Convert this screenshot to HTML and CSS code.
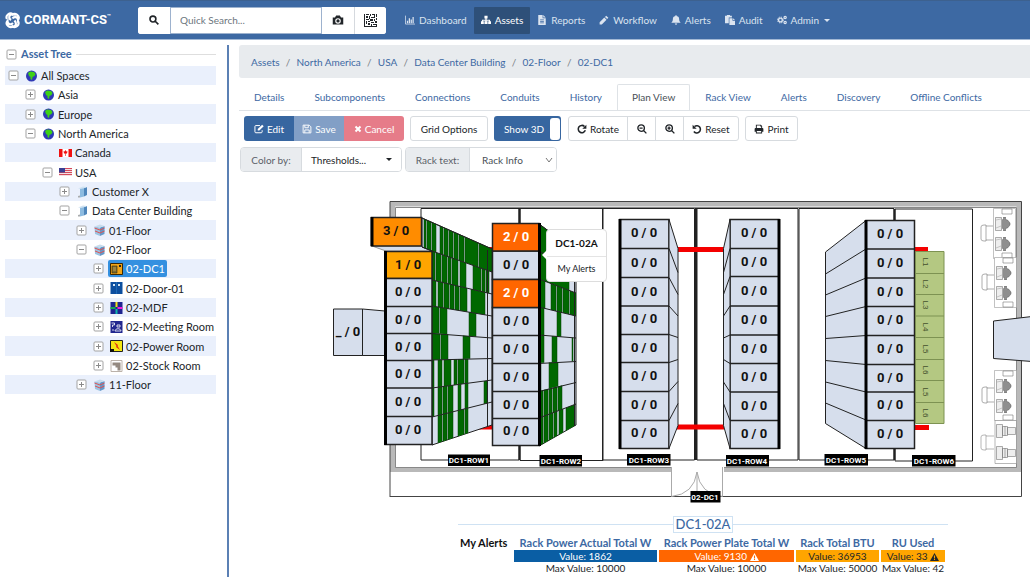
FILE: index.html
```html
<!DOCTYPE html>
<html lang="en">
<head>
<meta charset="utf-8">
<title>Cormant-CS - 02-DC1 Plan View</title>
<link rel="stylesheet" href="styles.css">
</head>
<body>
<svg class="sprite" aria-hidden="true">
  <symbol id="plus" viewBox="0 0 11 11"><rect x="1" y="1" width="9" height="9" rx="1" fill="#fff" stroke="#a3a3a3"/><path d="M3 5.500h5M5.500 3v5" stroke="#8a8a8a"/></symbol>
  <symbol id="minus" viewBox="0 0 11 11"><rect x="1" y="1" width="9" height="9" rx="1" fill="#fff" stroke="#a3a3a3"/><path d="M3 5.500h5" stroke="#8a8a8a"/></symbol>
  <symbol id="globe" viewBox="0 0 13 12"><circle cx="6.500" cy="6" r="5.500" fill="#2f39b5"/><path d="M3 3 5 1.500 9 2l1.500 2-1 2-2 1-.5 3-1.500-1V7L4 6z" fill="#3ed016"/></symbol>
  <symbol id="canada" viewBox="0 0 13 12"><path fill="#fff" d="M0 2h13v8H0z"/><path fill="#f01010" d="M0 2h3.500v8H0zM9.500 2H13v8H9.500zM6.500 3l1 1.500 1-.2-.5 2.200H6.800V9h-.6V6.500H5l-.5-2.200 1 .2z"/></symbol>
  <symbol id="usa" viewBox="0 0 13 12"><path fill="#f3dfe3" d="M0 2h13v8H0z"/><path stroke="#d54a5c" d="M0 2.500h13M0 4.500h13M0 6.500h13M0 8.500h13"/><path fill="#3b3f94" d="M0 2h6v4.500H0z"/></symbol>
  <symbol id="building" viewBox="0 0 13 12"><path fill="#8dbbe0" d="M4 2.500 8 2v8.500l-4 1z"/><path fill="#4f86bb" d="M8 2l3-1v8l-3 1.500z"/><path fill="#cfe2f2" d="M2 2.500 7 .5l4 .5-3 1.200-4 .6z"/><path fill="#a9acae" d="M2 10l2-.5v2H2z"/></symbol>
  <symbol id="floor" viewBox="0 0 13 12"><path fill="#9cc3e2" d="M1.500 2.500 7 3.500V12l-5-2z"/><path fill="#6598c8" d="M7 3.500 11.500 2v8L7 12z"/><path fill="#c7dced" d="M1.500 2.500 7 .5l4.500 1.500L7 3.500z"/><path d="M1.500 4 7 6l4.500-2M2 7l5 2 4.500-2" fill="none" stroke="#dc5353"/></symbol>
  <symbol id="dc" viewBox="0 0 13 12"><path fill="#f0a418" stroke="#3b2700" d="M.5.5h12v11H.5z"/><path fill="#806b2c" stroke="#382b0a" stroke-width=".6" d="M2 3h5v7H2z"/><path fill="#222" d="M9 2h2v2H9z"/><path d="M3 5h3M3 7h3" stroke="#d9b45e" stroke-width=".7"/></symbol>
  <symbol id="door" viewBox="0 0 13 12"><path fill="#0d4f9f" d="M.5 0h12v12H.5z"/><path stroke="#1d69b6" d="M6.500 0v12"/><path fill="#d8e8f4" d="M3 2h2v2H3zM8 2h2v2H8z"/></symbol>
  <symbol id="mdf" viewBox="0 0 13 12"><path fill="#1e2490" d="M.5 0h12v12H.5z"/><path fill="#14a451" d="M.5 5h5v2h-5z"/><path fill="#f3e21b" d="M5.500 0h2v5h-2z"/><path fill="#f31bd9" d="M7.500 5h5v2h-5z"/><path fill="#12b6ae" d="M5.500 7h2v5h-2z"/></symbol>
  <symbol id="meeting" viewBox="0 0 13 12"><path fill="#22288f" d="M.5 0h12v12H.5z"/><path fill="none" stroke="#fff" stroke-width=".8" d="M1.500 2h3v2h-2v2M7 4h3v2H7zM5 10c0-3 6-3 6 0zM2 9h2"/></symbol>
  <symbol id="power" viewBox="0 0 13 12"><path fill="#f4e812" stroke="#222" d="M.5.5h12v11H.5z"/><path fill="#e22a13" d="m4 2 4 3-.5 1 2.500 4-4-3 .5-1z"/><path fill="#111" d="M0 9h4v3H0z"/></symbol>
  <symbol id="stock" viewBox="0 0 13 12"><path fill="#fff" stroke="#bbb2aa" d="M1 .5h11v11H1z"/><path fill="#948980" d="M2.500 2.500h8v8h-3v-3h-2v-2h-3z"/></symbol>
  <symbol id="search" viewBox="0 0 16 16"><path fill="none" stroke="currentColor" stroke-width="2.600" d="M11 6.500a4.700 4.700 0 1 1-9.400 0 4.700 4.700 0 0 1 9.400 0zM10 10l5 5"/></symbol>
  <symbol id="zoomout" viewBox="0 0 16 16"><path fill="none" stroke="currentColor" stroke-width="2.200" d="M11.800 6.500a5.200 5.200 0 1 1-10.400 0 5.200 5.200 0 0 1 10.400 0zM10.500 10.500l4.500 4.500M4 6.500h5"/></symbol>
  <symbol id="zoomin" viewBox="0 0 16 16"><path fill="none" stroke="currentColor" stroke-width="2.200" d="M11.800 6.500a5.200 5.200 0 1 1-10.400 0 5.200 5.200 0 0 1 10.400 0zM10.500 10.500l4.500 4.500M4 6.500h5M6.500 4v5"/></symbol>
  <symbol id="rotate" viewBox="0 0 16 16"><path fill="none" stroke="currentColor" stroke-width="2.500" d="M12 4a5.800 5.800 0 1 0 1.300 6"/><path fill="currentColor" d="M15 1v6.500H8.500z"/></symbol>
  <symbol id="reset" viewBox="0 0 16 16"><path fill="none" stroke="currentColor" stroke-width="2.500" d="M4 4a5.800 5.800 0 1 1-1 8"/><path fill="currentColor" d="M1 1v6.500h6.500z"/></symbol>
  <symbol id="print" viewBox="0 0 16 16"><path fill="currentColor" d="M3 1h8l2 2v4h-1.500V4H10V2.500H4.500V7H3zM1 8q0-1.500 1.500-1.500h11Q15 6.500 15 8v4.500h-2V15H3v-2.500H1zm3.500 3v2.500h7V11z"/></symbol>
  <symbol id="edit" viewBox="0 0 16 16"><path fill="none" stroke="currentColor" stroke-width="1.600" d="M9.500 2.500H3Q1.500 2.500 1.500 4v8.500Q1.500 14 3 14h8.500q1.500 0 1.500-1.500V10"/><path fill="currentColor" d="m13 1 2.500 2.500-7 7H6V8z"/></symbol>
  <symbol id="save" viewBox="0 0 16 16"><path fill="none" stroke="currentColor" stroke-width="1.500" d="M1.800 1.800h9.700l2.700 2.700v9.700H1.800zM4.500 2v4h5.500V2M4.500 14V9.500h7V14"/></symbol>
  <symbol id="cross" viewBox="0 0 16 16"><path stroke="currentColor" stroke-width="4" d="m3 3 10 10M13 3 3 13"/></symbol>
  <symbol id="camera" viewBox="0 0 16 16"><path fill="currentColor" fill-rule="evenodd" d="M1 4.500h3L5.500 2h5L12 4.500h3V14H1zM8 5.500a3.700 3.700 0 1 0 0 7.400 3.700 3.700 0 0 0 0-7.400zm0 1.500a2.200 2.200 0 1 1 0 4.400A2.200 2.200 0 0 1 8 7z"/></symbol>
  <symbol id="qr" viewBox="0 0 13 13"><path fill="currentColor" d="M0 0h1v13H0zM1 12h12v1H1zM2 0h3v1H2zM6 0h1v2H6zM8 0h3v1H8zM12 0h1v3h-1zM2 2h2v2H2zM5 2h1v3H5zM7 3h3v1H7zM10 1h1v3h-1zM12 4h1v2h-1zM2 5h3v1H2zM6 5h3v2H6zM10 5h1v2h-1zM2 7h1v3H2zM4 7h2v1H4zM7 8h3v1H7zM11 7h2v2h-2zM4 9h2v2H4zM7 10h1v2H7zM9 10h3v1H9zM12 10h1v2h-1z"/></symbol>
  <symbol id="chart" viewBox="0 0 16 16"><path fill="none" stroke="currentColor" stroke-width="1.200" d="M.8 1v13.500H16"/><path fill="currentColor" d="M3 9h2v4H3zM6 5h2v8H6zM9 7h2v6H9zM12 3h2v10h-2z"/></symbol>
  <symbol id="sitemap" viewBox="0 0 16 16"><path fill="currentColor" d="M5.500 1h5v4.500H9v2h5.500V10H16v4.500h-4.500V10H13V9H9v1h1.500v4.500h-5V10H7V9H3v1h1.500v4.500H0V10h1.500V7.500H7v-2H5.500z"/></symbol>
  <symbol id="file" viewBox="0 0 16 16"><path fill="currentColor" fill-rule="evenodd" d="M2 0h7v5h5v11H2zm8 0 4 4h-4zM5 7v1.200h6V7zm0 2.500v1.200h6V9.500zM5 12v1.200h6V12z"/></symbol>
  <symbol id="pencil" viewBox="0 0 16 16"><path fill="currentColor" d="M11.500 1 15 4.500 13 6.500 9.500 3zM8.500 4 12 7.500 4.500 15H1v-3.500z"/></symbol>
  <symbol id="bell" viewBox="0 0 16 16"><path fill="currentColor" d="M8 0q1 0 1 1.500c3 .5 4 2.500 4 5 0 3 1 4.500 2.500 6H.5C2 11 3 9.500 3 6.500c0-2.500 1-4.500 4-5Q7 0 8 0zM6 13.500h4q-.5 2-2 2t-2-2z"/></symbol>
  <symbol id="paste" viewBox="0 0 16 16"><path fill="currentColor" d="M0 1h3V0h5v1h3v3H6v9H0zM7 5h5v4h4v7H7zM13 5l3 3h-3z"/></symbol>
  <symbol id="cogs" viewBox="0 0 16 16"><circle cx="5.500" cy="8" r="3" fill="none" stroke="currentColor" stroke-width="2.200"/><circle cx="5.500" cy="8" r="4.700" fill="none" stroke="currentColor" stroke-width="1.600" stroke-dasharray="2 1.700"/><g fill="none" stroke="currentColor" stroke-width="2"><circle cx="13" cy="4" r="1.800"/><circle cx="13" cy="12" r="1.800"/></g></symbol>
  <symbol id="warn" viewBox="0 0 16 14"><path fill="currentColor" fill-rule="evenodd" d="M8 0l8 14H0zM7 4.500v5h2v-5zM7 10.500v2h2v-2z"/></symbol>
  <symbol id="screen" viewBox="0 0 16 14"><path fill="#eee" stroke="#777" stroke-width=".6" d="M.5.500h6v13h-6z"/><path stroke="#999" stroke-width=".5" d="m1 3 5-1M1 11l5-2"/><path fill="#8f8f8f" stroke="#555" stroke-width=".5" d="M8.500 0h2v2.500l2 .5 2.500 3v2l-2.500 3-2 .5V14h-2v-2.500h-1v-9h1z"/></symbol>
  <symbol id="cabinet" viewBox="0 0 20 14"><path fill="#eee" stroke="#777" stroke-width=".6" d="M.5.500h6v13h-6zM6.500 2.500h5v9h-5zM11.500 3.500h8v7h-8z"/><path stroke="#777" stroke-width=".6" d="M9 2v10"/></symbol>
  <symbol id="desk" viewBox="0 0 36 51"><path fill="#fff" stroke="#999" stroke-width=".6" d="M13.500.500h22v50h-22z"/><path fill="#fff" stroke="#777" stroke-width=".6" d="M22 1h10v5H22zM22 45h10v5H22zM1 19q0-2 3-2h2v16H4q-3 0-3-2zM6 18h7M6 32h7"/><use href="#screen" x="15" y="9" width="16" height="14"/><use href="#screen" x="15" y="29" width="16" height="14"/></symbol>
</svg>

<header class="topbar">
  <a class="brand" href="#">
    <svg width="15" height="17" viewBox="0 0 15 17"><g fill="none" stroke="#fff" stroke-width="2.200"><path d="M2 7C0 3 5 0 8 2.500 4 2 3 6 6 8"/><path d="M6.500 3c4-3 9 1 6.500 5 0-3-4-4-5.500-1.500"/><path d="M13 9c2 4-2 7.500-6 5.500 4 .5 5-3 2.500-6"/><path d="M8.500 14C4 17 0 12 2.500 9c0 3 3 4.500 5.500 2"/></g></svg>
    <span>CORMANT-CS</span><sup>™</sup>
  </a>
  <form class="search">
    <button type="button" aria-label="Search"><svg class="ic"><use href="#search"/></svg></button>
    <input type="text" placeholder="Quick Search..." aria-label="Quick Search">
    <button type="button" aria-label="Camera"><svg class="ic big"><use href="#camera"/></svg></button>
    <button type="button" aria-label="Scan code"><svg class="ic qr"><use href="#qr"/></svg></button>
  </form>
  <nav class="mainnav">
    <a href="#"><svg class="ic nav"><use href="#chart"/></svg>Dashboard</a>
    <a href="#" class="active"><svg class="ic nav"><use href="#sitemap"/></svg>Assets</a>
    <a href="#"><svg class="ic nav"><use href="#file"/></svg>Reports</a>
    <a href="#"><svg class="ic nav"><use href="#pencil"/></svg>Workflow</a>
    <a href="#"><svg class="ic nav"><use href="#bell"/></svg>Alerts</a>
    <a href="#"><svg class="ic nav"><use href="#paste"/></svg>Audit</a>
    <a href="#"><svg class="ic nav"><use href="#cogs"/></svg>Admin<i class="caret"></i></a>
  </nav>
</header>

<div class="layout">
<aside class="sidebar">
  <h2><svg class="box"><use href="#minus"/></svg><span>Asset Tree</span></h2>
  <ul class="tree">
    <li class="l0"><svg class="box"><use href="#minus"/></svg><a href="#"><svg class="pic"><use href="#globe"/></svg>All Spaces</a></li>
    <li class="l1"><svg class="box"><use href="#plus"/></svg><a href="#"><svg class="pic"><use href="#globe"/></svg>Asia</a></li>
    <li class="l1"><svg class="box"><use href="#plus"/></svg><a href="#"><svg class="pic"><use href="#globe"/></svg>Europe</a></li>
    <li class="l1"><svg class="box"><use href="#minus"/></svg><a href="#"><svg class="pic"><use href="#globe"/></svg>North America</a></li>
    <li class="l2"><svg class="box"></svg><a href="#"><svg class="pic"><use href="#canada"/></svg>Canada</a></li>
    <li class="l2"><svg class="box"><use href="#minus"/></svg><a href="#"><svg class="pic"><use href="#usa"/></svg>USA</a></li>
    <li class="l3"><svg class="box"><use href="#plus"/></svg><a href="#"><svg class="pic"><use href="#building"/></svg>Customer X</a></li>
    <li class="l3"><svg class="box"><use href="#minus"/></svg><a href="#"><svg class="pic"><use href="#building"/></svg>Data Center Building</a></li>
    <li class="l4"><svg class="box"><use href="#plus"/></svg><a href="#"><svg class="pic"><use href="#floor"/></svg>01-Floor</a></li>
    <li class="l4"><svg class="box"><use href="#minus"/></svg><a href="#"><svg class="pic"><use href="#floor"/></svg>02-Floor</a></li>
    <li class="l5"><svg class="box"><use href="#plus"/></svg><a href="#" class="selected"><svg class="pic"><use href="#dc"/></svg>02-DC1</a></li>
    <li class="l5"><svg class="box"><use href="#plus"/></svg><a href="#"><svg class="pic"><use href="#door"/></svg>02-Door-01</a></li>
    <li class="l5"><svg class="box"><use href="#plus"/></svg><a href="#"><svg class="pic"><use href="#mdf"/></svg>02-MDF</a></li>
    <li class="l5"><svg class="box"><use href="#plus"/></svg><a href="#"><svg class="pic"><use href="#meeting"/></svg>02-Meeting Room</a></li>
    <li class="l5"><svg class="box"><use href="#plus"/></svg><a href="#"><svg class="pic"><use href="#power"/></svg>02-Power Room</a></li>
    <li class="l5"><svg class="box"><use href="#plus"/></svg><a href="#"><svg class="pic"><use href="#stock"/></svg>02-Stock Room</a></li>
    <li class="l4"><svg class="box"><use href="#plus"/></svg><a href="#"><svg class="pic"><use href="#floor"/></svg>11-Floor</a></li>
  </ul>
</aside>

<main class="main">
  <nav class="crumbs" aria-label="Breadcrumb"><a href="#">Assets</a><i>/</i><a href="#">North America</a><i>/</i><a href="#">USA</a><i>/</i><a href="#">Data Center Building</a><i>/</i><a href="#">02-Floor</a><i>/</i><a href="#">02-DC1</a></nav>
  <nav class="tabs">
    <a href="#">Details</a><a href="#">Subcomponents</a><a href="#">Connections</a><a href="#">Conduits</a><a href="#">History</a><a href="#" class="active">Plan View</a><a href="#">Rack View</a><a href="#">Alerts</a><a href="#">Discovery</a><a href="#">Offline Conflicts</a>
  </nav>
  <div class="tools">
    <div class="group solid">
      <button class="edit"><svg class="ic"><use href="#edit"/></svg>Edit</button><button class="save"><svg class="ic"><use href="#save"/></svg>Save</button><button class="cancel"><svg class="ic sm"><use href="#cross"/></svg>Cancel</button>
    </div>
    <div class="group"><button class="grid-options">Grid Options</button></div>
    <label class="toggle">Show 3D<input type="checkbox" checked></label>
    <div class="group view">
      <button class="rotate"><svg class="ic"><use href="#rotate"/></svg>Rotate</button><button class="zoom" aria-label="Zoom out"><svg class="ic"><use href="#zoomout"/></svg></button><button class="zoom" aria-label="Zoom in"><svg class="ic"><use href="#zoomin"/></svg></button><button class="reset"><svg class="ic"><use href="#reset"/></svg>Reset</button>
    </div>
    <div class="group"><button class="print"><svg class="ic"><use href="#print"/></svg>Print</button></div>
  </div>
  <div class="filters">
    <div class="field"><span class="tag color">Color by:</span><button class="drop">Thresholds...<i class="caret"></i></button></div>
    <div class="field"><label class="tag rack" for="racktext">Rack text:</label><div class="pick"><select id="racktext"><option>Rack Info</option></select><svg viewBox="0 0 8 8"><path d="M1 2l3 4 3-4" fill="none" stroke="#777"/></svg></div></div>
  </div>

  <div class="plan">
  <svg class="drawing" viewBox="230 172 800 338" role="img" aria-label="Floor plan of 02-DC1">
    <defs>
      <clipPath id="a1"><path d="M422 218 492 249V272L432 251 422 247z"/></clipPath>
      <clipPath id="a2"><path d="M432 251 492 272V294L432 280z"/></clipPath>
      <clipPath id="a3"><path d="M432 280 492 294V316L432 306z"/></clipPath>
      <clipPath id="a4"><path d="M432 306 492 316V338L432 333z"/></clipPath>
      <clipPath id="a5"><path d="M432 333 492 338V358L432 360z"/></clipPath>
      <clipPath id="a6"><path d="M432 360 492 358V380L432 388z"/></clipPath>
      <clipPath id="a7"><path d="M432 388 492 380V402L432 417z"/></clipPath>
      <clipPath id="a8"><path d="M432 417 492 402V425L432 445z"/></clipPath>
      <clipPath id="b1"><path d="M539 224 576 251V272L539 251z"/></clipPath>
      <clipPath id="b2"><path d="M539 251 576 272V293L539 279z"/></clipPath>
      <clipPath id="b3"><path d="M539 279 576 293V316L539 307z"/></clipPath>
      <clipPath id="b4"><path d="M539 307 576 316V338L539 335z"/></clipPath>
      <clipPath id="b5"><path d="M539 335 576 338V361L539 363z"/></clipPath>
      <clipPath id="b6"><path d="M539 363 576 361V382L539 391z"/></clipPath>
      <clipPath id="b7"><path d="M539 391 576 382V404L539 418z"/></clipPath>
      <clipPath id="b8"><path d="M539 418 576 404V425L539 446z"/></clipPath>
    </defs>
    <!-- walls -->
    <path class="wall" d="M671 469.500H392.500V204H1019v265.500H724"/>
    <path class="thin" d="M671 467.500H395.500V207.500H1016.500V467.500H724"/>
    <path class="outer" d="M390 497V201.500H1021.500V496.500H390"/>
    <path class="door" d="M671.500 467v29.500M722.500 467v29.500M697 472v24M671.500 496.500Q694 494 697 472 700 494 722.500 496.500"/>
    <!-- row outlines -->
    <path class="row" d="M421 208.500h98v251.500h-98zM520 208.500h83v252h-83zM602.500 208.500h92v251.500h-92zM697 208.500h101v251.500h-101zM799 208.500h95v251.500h-95zM895 209h77.500v252H895z"/>
    <path class="thick" d="M519.500 208v252M696 208v252M894.500 209v251"/>
    <!-- overhead trays -->
    <path class="tray" d="M480 249.500h20M478 427h20M677 249.500h47M677 427h47M914 249.500h14M914 427.500h15"/>
    <!-- desks -->
    <use href="#desk" x="980" y="208" width="36" height="51"/>
    <use href="#desk" x="981" y="257" width="36" height="51"/>
    <use href="#desk" x="981" y="370" width="36" height="51"/>
    <path class="desktop" d="M995 420.500h21.500v43H995zM981 437q0-2 3-2h2v15h-2q-3 0-3-2zM986 436h8M986 449h8"/>
    <use href="#cabinet" x="996" y="424" width="20" height="14"/>
    <use href="#cabinet" x="996" y="446" width="20" height="14"/>
    <!-- outlying racks -->
    <path class="cell" d="M333.500 309h29v46.500h-29zM362.500 309l22.500 2v44.500h-22.500zM1032 316.500l-38.500 4.500v37.500l38.500 3z"/>
    <!-- row 1 -->
    <path class="cell faint" d="M372 246h50l10 5h-46z"/>
    <path class="cell" d="M422 218 492 249V425L432 445V251l-10-4z"/>
    <g class="rackfill">
      <path clip-path="url(#a1)" d="M424 210h2v80h-2zM427 210h4v80h-4zM432 210h4v80h-4zM440 210h3v80h-3zM444 210h4v80h-4zM449 210h4v80h-4zM454 210h4v80h-4zM459 210h5v80h-5zM465 210h13v80h-13zM479 210h13v80h-13z"/>
      <path clip-path="url(#a2)" d="M432 240h3v60h-3zM436 240h5v60h-5zM442 240h5v60h-5zM448 240h3v60h-3zM452 240h6v60h-6zM460 240h6v60h-6zM473 240h8v60h-8zM482 240h3v60h-3zM486 240h3v60h-3z"/>
      <path clip-path="url(#a3)" d="M432 270h4v60h-4zM438 270h5v60h-5zM444 270h5v60h-5zM450 270h4v60h-4zM455 270h4v60h-4zM460 270h7v60h-7zM471 270h14v60h-14z"/>
      <path clip-path="url(#a4)" d="M432 300h7v60h-7zM440 300h7v60h-7zM469 300h7v60h-7z"/>
      <path clip-path="url(#a5)" d="M432 330h8v60h-8zM441 330h7v60h-7zM463 330h7v60h-7z"/>
      <path clip-path="url(#a6)" d="M432 350h2v60h-2zM438 350h4v60h-4zM444 350h7v60h-7zM454 350h3v60h-3zM458 350h6v60h-6zM465 350h3v60h-3z"/>
      <path clip-path="url(#a7)" d="M432 370h2v60h-2zM438 370h4v60h-4zM443 370h4v60h-4zM448 370h5v60h-5zM458 370h3v60h-3zM465 370h3v60h-3zM484 370h3v60h-3z"/>
      <path clip-path="url(#a8)" d="M438 400h4v60h-4zM443 400h4v60h-4zM448 400h5v60h-5zM458 400h6v60h-6zM465 400h3v60h-3z"/>
    </g>
    <path class="edge" d="M422 218 492 249M422 247l10 4 60 21M432 280l60 14M432 306l60 10M432 333.500l60 4.500M432 360l60-1.500M432 388l60-8M432 417l60-15M487.500 250v176"/>
    <path class="cell amber-dark" d="M371.500 217.500h50V246h-50z"/>
    <path class="cell amber" d="M385 251.500h47v27h-47z"/>
    <path class="cell bold" d="M385 278.500h47v28h-47zM385 306.500h47v27h-47zM385 333.500h47v27h-47zM385 360.500h47v27.500h-47zM385 388h47v28.500h-47zM385 416.500h47v28h-47z"/>
    <path class="side" d="M372 217v29M385.500 251v194"/>
    <!-- row 2 -->
    <path class="cell" d="M539 224 576 251V425L539 446z"/>
    <g class="rackfill">
      <path clip-path="url(#b1)" d="M539 220h37v60h-37z"/>
      <path clip-path="url(#b2)" d="M539 240h30v60h-30z"/>
      <path clip-path="url(#b3)" d="M539 270h6v60h-6zM551 270h5v60h-5zM557 270h5v60h-5zM563 270h6v60h-6zM570 270h6v60h-6z"/>
      <path clip-path="url(#b4)" d="M539 300h5v60h-5zM557 300h4v60h-4z"/>
      <path clip-path="url(#b5)" d="M539 330h5v60h-5zM552 330h5v60h-5zM572 330h1v60h-1z"/>
      <path clip-path="url(#b6)" d="M539 350h2v60h-2zM549 350h9v60h-9z"/>
      <path clip-path="url(#b7)" d="M539 370h4v60h-4zM544 370h4v60h-4zM549 370h3v60h-3zM553 370h4v60h-4zM558 370h4v60h-4z"/>
      <path clip-path="url(#b8)" d="M539 390h4v60h-4zM544 390h4v60h-4zM549 390h4v60h-4zM554 390h3v60h-3zM559 390h4v60h-4zM566 390h9v60h-9z"/>
    </g>
    <path class="edge" d="M539 224l37 27M539 251l37 21M539 279l37 14M539 307l37 9M539 335l37 3M539 363.500l37-2M539 391.500l37-9M539 418l37-14M574.500 252v174"/>
    <path class="cell bold" d="M492.500 251h46.500v28.500h-46.500zM492.500 307.500h46.500v28h-46.500zM492.500 335.500h46.500v28h-46.500zM492.500 363.500h46.500v28h-46.500zM492.500 391.500h46.500v27h-46.500zM492.500 418.500h46.500v27h-46.500z"/>
    <path class="cell orange" d="M492.500 223.500h46.500v27.500h-46.500zM492.500 279.500h46.500v28h-46.500z"/>
    <path class="side" d="M539.500 223v223"/>
    <!-- row 3 -->
    <path class="cell bold" d="M620 219.500h49v229h-49zM620 248.500h49M620 277.500h49M620 306h49M620 334.500h49M620 362.500h49M620 391.500h49M620 420.500h49"/>
    <path class="cell" d="M669 219.500l9 29v177l-9 23zM669 248.500l9 24M669 277.500l9 17M669 306l9 10M669 334.500l9 3M669 362.500l9-3M669 391.500l9-10M669 420.500l9-17"/>
    <path class="side" d="M620 219v230"/>
    <!-- row 4 -->
    <path class="cell bold" d="M730 219.500h49v229h-49zM730 248.500h49M730 276.500h49M730 306h49M730 335h49M730 363.500h49M730 392h49M730 420.500h49"/>
    <path class="cell" d="M730 219.500l-6.500 29v177l6.500 23zM730 248.500l-6.500 24M730 276.500l-6.500 18M730 306l-6.500 10M730 335l-6.500 3M730 363.500l-6.500-4M730 392l-6.500-10M730 420.500l-6.500-17"/>
    <path class="side" d="M779 219v230"/>
    <!-- row 5 -->
    <path class="cell" d="M866 220.500 825.500 252V423.500L866 448.500zM866 249l-40.500 25M866 278l-40.500 17M866 306.500l-40.500 10M866 335.500l-40.500 3M866 364.500l-40.500-4M866 392l-40.500-10M866 420l-40.500-17"/>
    <path class="cell bold" d="M866 220.500h48.500v228H866zM866 249h48.500M866 278h48.500M866 306.500h48.500M866 335.500h48.500M866 364.500h48.500M866 392h48.500M866 420.500h48.500"/>
    <path class="side" d="M866 220v229"/>
    <!-- row 6 -->
    <path class="green" d="M915.500 251.500h28.500v172h-28.500zM915.500 273.500H944M915.500 294.500H944M915.500 316H944M915.500 337.500H944M915.500 359.500H944M915.500 380.500H944M915.500 402.500H944"/>
    <g class="lnum">
      <text transform="translate(923 262) rotate(90)">L1</text><text transform="translate(923 284) rotate(90)">L2</text><text transform="translate(923 305) rotate(90)">L3</text><text transform="translate(923 327) rotate(90)">L4</text><text transform="translate(923 349) rotate(90)">L5</text><text transform="translate(923 370) rotate(90)">L6</text><text transform="translate(923 392) rotate(90)">L5</text><text transform="translate(923 413) rotate(90)">L6</text>
    </g>
    <g class="count">
      <text x="348" y="336">_ / 0</text>
      <text x="396" y="235">3 / 0</text><text x="408" y="269">1 / 0</text><text x="408" y="296">0 / 0</text><text x="408" y="324">0 / 0</text><text x="408" y="351">0 / 0</text><text x="408" y="378">0 / 0</text><text x="408" y="406">0 / 0</text><text x="408" y="434">0 / 0</text>
      <text x="516" y="241" class="light">2 / 0</text><text x="516" y="269">0 / 0</text><text x="516" y="297" class="light">2 / 0</text><text x="516" y="325">0 / 0</text><text x="516" y="353">0 / 0</text><text x="516" y="381">0 / 0</text><text x="516" y="409">0 / 0</text><text x="516" y="435">0 / 0</text>
      <text x="644" y="237">0 / 0</text><text x="644" y="267">0 / 0</text><text x="644" y="296">0 / 0</text><text x="644" y="323">0 / 0</text><text x="644" y="352">0 / 0</text><text x="644" y="380">0 / 0</text><text x="644" y="409">0 / 0</text><text x="644" y="437">0 / 0</text>
      <text x="754" y="237">0 / 0</text><text x="754" y="266">0 / 0</text><text x="754" y="295">0 / 0</text><text x="754" y="324">0 / 0</text><text x="754" y="353">0 / 0</text><text x="754" y="381">0 / 0</text><text x="754" y="410">0 / 0</text><text x="754" y="438">0 / 0</text>
      <text x="890" y="238">0 / 0</text><text x="890" y="267">0 / 0</text><text x="890" y="296">0 / 0</text><text x="890" y="324">0 / 0</text><text x="890" y="353">0 / 0</text><text x="890" y="382">0 / 0</text><text x="890" y="409">0 / 0</text><text x="890" y="438">0 / 0</text>
    </g>
    <path d="M448 454.500h42v11.500h-42zM539.500 455h42.500v11.500h-42.500zM627 454h43.500v11.500H627zM726 455h43v11.500h-43zM824.500 454h43.500v11.500h-43.500zM912 455h43.500v11.500H912zM690.500 491h30v11.500h-30z"/>
    <g class="name">
      <text x="469" y="463">DC1-ROW1</text><text x="561" y="464">DC1-ROW2</text><text x="649" y="463">DC1-ROW3</text><text x="747" y="464">DC1-ROW4</text><text x="846" y="463">DC1-ROW5</text><text x="934" y="464">DC1-ROW6</text><text x="705" y="500">02-DC1</text>
    </g>
  </svg>
  <div class="tip" role="tooltip"><strong>DC1-02A</strong><span>My Alerts</span></div>
  </div>

  <section class="summary">
    <h3><span>DC1-02A</span></h3>
    <table>
      <thead><tr><th class="label" scope="row">My Alerts</th><th class="actual">Rack Power Actual Total W</th><th class="plate">Rack Power Plate Total W</th><th class="btu">Rack Total BTU</th><th class="ru">RU Used</th></tr></thead>
      <tbody>
        <tr><td></td><td class="v-blue">Value: 1862</td><td class="v-orange">Value: 9130 <svg class="wi"><use href="#warn"/></svg></td><td class="v-amber">Value: 36953</td><td class="v-amber">Value: 33 <svg class="wi"><use href="#warn"/></svg></td></tr>
        <tr class="max"><td></td><td>Max Value: 10000</td><td>Max Value: 10000</td><td>Max Value: 50000</td><td>Max Value: 42</td></tr>
      </tbody>
    </table>
  </section>
</main>
</div>
</body>
</html>
```
FILE: styles.css
```css
* { box-sizing: border-box; }
body { margin: 0; background: #fff; color: #212529; font: 10px/14px Lato, "Open Sans", sans-serif; overflow: hidden; }
a { color: inherit; text-decoration: none; }
button, input, select { font: inherit; color: inherit; margin: 0; }
ul { list-style: none; margin: 0; padding: 0; }
.sprite { position: absolute; width: 0; height: 0; }
.ic { width: 10px; height: 10px; flex: none; }
.ic.sm { width: 8px; height: 8px; }
.ic.big { width: 12px; height: 12px; }
.ic.qr { width: 13px; height: 13px; }
.caret { width: 0; height: 0; border: 3px solid transparent; border-top-color: currentColor; border-bottom: 0; }

.topbar { display: flex; align-items: center; height: 40px; background: #3d69a3; border-top: 1px solid #3d618f; border-bottom: 1px solid #a3b9d5; }
.brand { display: flex; align-items: center; width: 133px; padding-left: 5px; color: #fff; font: bold 13px/16px Roboto, sans-serif; }
.brand svg { margin-right: 4px; }
.brand sup { font-size: 6px; line-height: 8px; align-self: flex-start; }
.search { display: flex; width: 248px; height: 27px; margin-left: 5px; background: #fff; border-radius: 3px; overflow: hidden; }
.search button { display: flex; align-items: center; justify-content: center; width: 32px; border: 0; background: #fff; padding: 0; }
.search button + button { border-left: 1px solid #d5d9de; }
.search input { flex: 1; min-width: 0; border: 1px solid #9db2ce; padding: 0 9px; outline: 0; }
.search input::placeholder { color: #6c757d; }
.mainnav { display: flex; height: 27px; margin-left: 12px; color: #dbe4f0; }
.mainnav a { display: flex; align-items: center; gap: 4px; padding: 0 7px; white-space: nowrap; }
.mainnav .active { background: #2e5079; color: #fff; border-radius: 1px; }
.mainnav .caret { margin-left: 1px; }

.layout { display: flex; align-items: stretch; min-height: calc(100vh - 45px); margin-top: 5px; }
.sidebar { flex: none; width: 229px; padding: 0 11px 0 5px; border-right: 2px solid #5b80b4; }
.sidebar h2 { display: flex; align-items: center; gap: 4px; height: 21px; margin: 0; padding: 0 0 3px 1px; font-size: 11px; line-height: 14px; color: #3d69a3; }
.sidebar h2::after { content: ""; flex: 1; height: 1px; background: #dedede; }
.box { width: 11px; height: 11px; flex: none; }
.tree li { display: flex; align-items: center; gap: 4px; min-height: 19px; padding-left: 3px; font-size: 11px; line-height: 17px; white-space: nowrap; }
.tree li:nth-child(3n) { min-height: 20px; }
.tree li:nth-child(odd) { background: #eaf0fc; }
.tree .l1 { padding-left: 20px; }
.tree .l2 { padding-left: 37px; }
.tree .l3 { padding-left: 54px; }
.tree .l4 { padding-left: 71px; }
.tree .l5 { padding-left: 88px; }
.tree a { display: flex; align-items: center; gap: 3px; padding: 0 2px; }
.tree .selected { background: #3490e0; color: #fff; border-radius: 2px; }
.pic { width: 13px; height: 12px; flex: none; }

.main { flex: 1; min-width: 0; }
.crumbs { display: flex; align-items: center; height: 33px; margin-left: 10px; padding: 0 12px; background: #e8ebee; border-radius: 3px 0 0 3px; color: #3d69a3; }
.crumbs i { width: 17px; text-align: center; color: #7a8085; font-style: normal; }
.tabs { display: flex; margin: 6px 0 0 10px; border-bottom: 1px solid #dee2e6; color: #3d69a3; }
.tabs a { padding: 5px 14px; height: 26px; border: 1px solid transparent; border-bottom: 0; white-space: nowrap; }
.tabs .active { background: #fff; border-color: #dee2e6; border-radius: 2px 2px 0 0; color: #495057; margin-bottom: -1px; }

.tools { display: flex; gap: 6px; margin: 5px 0 0 15px; }
.group { display: flex; height: 25px; border: 1px solid #d7dbdf; border-radius: 3px; overflow: hidden; background: #fff; }
.group button { display: flex; align-items: center; justify-content: center; gap: 3px; border: 0; background: none; padding: 0 9px; white-space: nowrap; }
.group button + button { border-left: 1px solid #d7dbdf; }
.group.solid { border: 0; color: #fff; }
.group.solid button { border: 0; width: 50px; padding: 0; }
.group.solid .edit { background: #3766a0; }
.group.solid .save { background: #829fc6; }
.group.solid .cancel { background: #e67c89; width: 60px; }
.group .grid-options { width: 76px; padding: 0; }
.group .rotate { width: 58px; padding: 0; }
.group .zoom { width: 28px; padding: 0; }
.group .reset { width: 55px; padding: 0; }
.group .print { width: 51px; padding: 0; }
.toggle { display: flex; align-items: center; justify-content: space-between; width: 67px; height: 25px; padding: 1px 1px 1px 10px; border-radius: 3px; background: #3766a0; color: #fff; white-space: nowrap; }
.toggle input { appearance: none; width: 10px; height: 22px; border-radius: 3px; background: #fff; }
.view { margin-left: 1px; }

.filters { display: flex; gap: 3px; margin: 6px 0 0 11px; }
.field { display: flex; height: 25px; border: 1px solid #d7dbdf; border-radius: 4px; overflow: hidden; }
.tag { display: flex; align-items: center; justify-content: center; background: #e9ecef; border-right: 1px solid #d7dbdf; color: #5a6168; }
.tag.color { width: 61px; }
.tag.rack { width: 64px; }
.drop { display: flex; align-items: center; justify-content: space-between; width: 99px; border: 0; background: #fff; padding: 0 9px; }
.pick { position: relative; display: flex; }
.pick select { width: 86px; appearance: none; border: 0; background: #fff; padding: 0 12px; color: #495057; }
.pick svg { position: absolute; right: 3px; top: 8px; width: 8px; height: 8px; pointer-events: none; }

.plan { position: relative; margin-left: 1px; }
.drawing { display: block; width: 100%; }
.wall { fill: none; stroke: #b9b9b9; stroke-width: 5; }
.thin { fill: none; stroke: #888; }
.outer { fill: none; stroke: #444; }
.door { fill: none; stroke: #aaa; }
.row { fill: none; stroke: #222; }
.thick { stroke: #222; stroke-width: 2; }
.tray { stroke: #f40000; stroke-width: 5; }
.cell { fill: #d6deec; stroke: #222; }
.cell.bold { stroke-width: 1.5; }
.cell.faint { stroke: #999; }
.cell.amber-dark { fill: #ff8c00; stroke-width: 1.5; }
.cell.amber { fill: #ffa500; stroke-width: 1.5; }
.cell.orange { fill: #ff6600; stroke-width: 1.5; }
.side { stroke: #000; stroke-width: 3; }
.edge { fill: none; stroke: #222; }
.rackfill { fill: #006800; stroke: #073f07; stroke-width: 0.5; }
.green { fill: #b4c882; stroke: #7d9252; }
.desktop { fill: #fff; stroke: #888; stroke-width: 0.6; }
.lnum { font: 8px "Liberation Sans", sans-serif; fill: #44502c; text-anchor: middle; }
.count { font: bold 13px Roboto, sans-serif; fill: #111; text-anchor: middle; }
.count .light { fill: #fff; }
.name { font: bold 8px Roboto, sans-serif; fill: #fff; text-anchor: middle; }
.tip { position: absolute; left: 39.5%; top: 17%; width: 61px; border: 1px solid #ddd; border-radius: 4px; background: #fff; text-align: center; }
.tip::before { content: ""; position: absolute; left: -5px; top: 20px; border: 5px solid transparent; border-right-color: #fff; border-left: 0; }
.tip strong { display: block; padding: 6px 0; border-bottom: 1px solid #e4e4e4; font-size: 10px; line-height: 14px; color: #111; }
.tip span { display: block; padding: 5px 0; font-size: 9px; line-height: 14px; }

.summary { width: 490px; margin: 6px auto 0 229px; }
.summary h3 { display: flex; align-items: center; margin: 0; color: #3d69a3; font-size: 13px; line-height: 15px; font-weight: 500; }
.summary h3::before, .summary h3::after { content: ""; flex: 1; height: 1px; background: #cfe2f3; }
.summary h3 span { padding: 0 2px; border: 1px solid #cfe2f3; }
table { border-collapse: separate; border-spacing: 2px 0; margin-top: 2px; }
th { padding: 0; color: #3d69a3; font-size: 11px; line-height: 15px; white-space: nowrap; }
th.label { width: 52px; color: #111; text-align: left; }
.actual { width: 143px; }
.plate { width: 135px; }
.btu { width: 83px; }
.ru { width: 64px; }
td { padding: 0; text-align: center; font-size: 10px; line-height: 12px; white-space: nowrap; }
.max td { line-height: 13px; }
.wi { width: 9px; height: 8px; vertical-align: -1px; }
.v-blue { background: #0a5ea4; color: #fff; }
.v-orange { background: #ff6600; color: #fff; }
.v-amber { background: #ffa500; }
```
